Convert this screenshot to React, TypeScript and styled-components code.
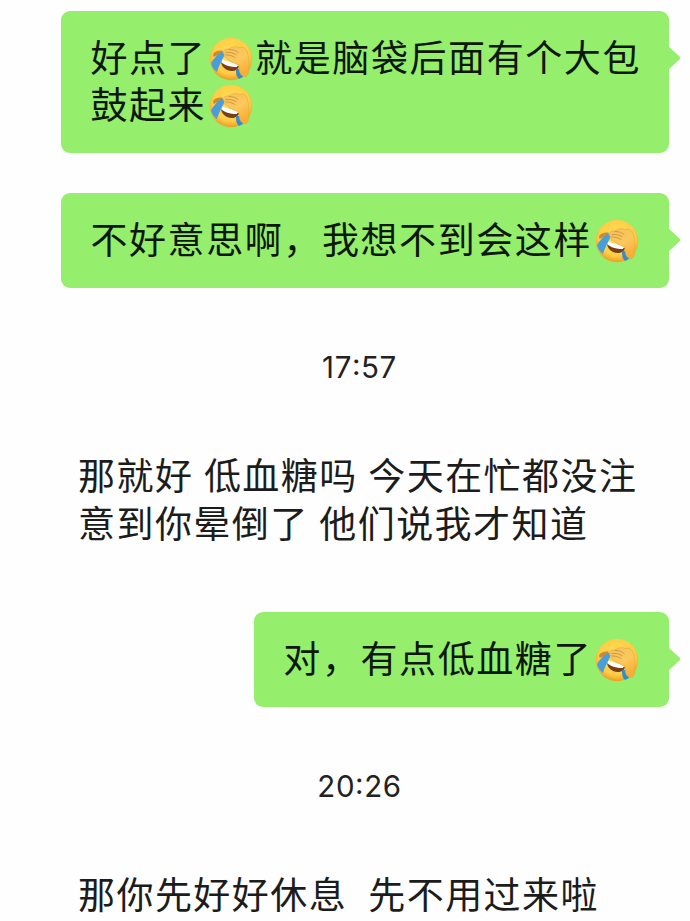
import React, {FC, Fragment, useId} from "react";
import styled, { createGlobalStyle, css } from "styled-components";

const GlobalStyle = createGlobalStyle`
    body {
        margin: 0;
        background: #fefefe;
        overflow: hidden;
    }
`;

type TMessage = {
    readonly type: "sent" | "received" | "time";
    readonly lines: string[];
};

const messages: TMessage[] = [
    {type: "sent", lines: ["好点了🤦就是脑袋后面有个大包", "鼓起来🤦"]},
    {type: "sent", lines: ["不好意思啊，我想不到会这样🤦"]},
    {type: "time", lines: ["17:57"]},
    {type: "received", lines: ["那就好 低血糖吗 今天在忙都没注", "意到你晕倒了 他们说我才知道"]},
    {type: "sent", lines: ["对，有点低血糖了🤦"]},
    {type: "time", lines: ["20:26"]},
    {type: "received", lines: ["那你先好好休息  先不用过来啦"]},
];

const Chat = styled.main`
    width: 690px;
    height: 921px;
    box-sizing: border-box;
    padding: 11px 21px 0 61px;
    display: flex;
    flex-direction: column;
    overflow: hidden;
    background: #fefefe;
    font-family: "Noto Sans CJK SC", sans-serif;
    color: #1c1c1c;
`;

const Bubble = styled.div<{ $sent: boolean }>`
    position: relative;
    box-sizing: border-box;
    flex-shrink: 0;
    letter-spacing: 1.45px;
    ${props => props.$sent && css`
        align-self: flex-end;
        margin-bottom: 40px;
        padding: 24px 28px 24px 29px;
        border-radius: 9px;
        background: #95ee6c;
        color: #0d180a;
        letter-spacing: 1.58px;
    `}
    ${props => !props.$sent && css`
        align-self: flex-start;
        padding: 0 0 65px 17px;
    `}
`;

const Tail = styled.svg`
    position: absolute;
    left: calc(100% - 1px);
    top: 34px;
    width: 13px;
    height: 26px;
`;

const Line = styled.div<{ $sent: boolean }>`
    display: flex;
    align-items: center;
    height: ${props => props.$sent ? "47px" : "47.5px"};
    font-size: 37px;
    line-height: 43px;
    word-spacing: 0.8px;
    white-space: pre;
`;

const Words = styled.span<{ $sent: boolean }>`
    margin-bottom: ${props => props.$sent ? "4px" : "2px"};
`;

const Time = styled.time`
    align-self: center;
    flex-shrink: 0;
    height: 40px;
    margin: 20px 0 64px -11px;
    font-family: Inter, sans-serif;
    font-size: 29.5px;
    font-kerning: none;
    font-feature-settings: "case";
    line-height: 39px;
    letter-spacing: 0.6px;
    color: #222;
`;

const EmojiIcon = styled.svg`
    width: 44px;
    height: 44px;
    margin: 0 2px 0 3px;
    flex-shrink: 0;
`;

const Facepalm: FC = () => {
    const id = useId();

    return (
        <EmojiIcon viewBox="0 0 44 44" role="img" aria-label="捂脸">
            <defs>
                <radialGradient id={`${id}face`} cx="0.5" cy="0.42" r="0.6">
                    <stop offset="0" stopColor="#ffe15c" />
                    <stop offset="0.72" stopColor="#ffcd45" />
                    <stop offset="1" stopColor="#ec9420" />
                </radialGradient>
                <linearGradient id={`${id}hand`} x1="0" y1="0" x2="0.5" y2="1">
                    <stop offset="0" stopColor="#f0c160" />
                    <stop offset="0.6" stopColor="#fbc85a" />
                    <stop offset="1" stopColor="#f9af35" />
                </linearGradient>
            </defs>
            <circle cx="22" cy="22" r="21.2" fill={`url(#${id}face)`} />
            <path d="M12 24C17 27 24 29 30 29C29 34 23 35 18 33C14 31 12 28 12 24Z" fill="#7c3e16" />
            <path d="M13 22.5C18 24 23 26 29 27L28 30C21 30 15 28 12 25Z" fill="#fff" />
            <path d="M4 17C7 13.5 11 13 14 14L12 17C9 18 7 19 4.5 20Z" fill="#c98c35" />
            <path d="M13 15C9 17 4 22 2 26.5C3 30 5 33 8 35C9 31 11 27 14 21C16 18 16 15 13 15Z" fill="#489edb" />
            <path d="M27 32C27 36 27 39 30 42L34 40L31 32Z" fill="#318dcc" />
            <path
                d="M14.5 15.5C14 13 17 11.5 20 12C23 9.5 27 9 30 10.5C35 9 38 12 39 18C40 24 41 32 39 37C37 41 33 40 31 36C30 33 30 30 30 28C26 27 21 24 17 21C15 20 15 18 18 18C15 17.5 14 17 14.5 15.5Z"
                fill={`url(#${id}hand)`}
                stroke="#e5a440"
                strokeWidth="0.6"
            />
            <path
                d="M17 15.5C21 15 24 16 27 17.5M20 12.5C24 12.5 27 13.5 29 15.5M18 18C22 18 24 19.5 26 20.5"
                fill="none"
                stroke="#c98c39"
                strokeWidth="0.8"
                strokeLinecap="round"
            />
        </EmojiIcon>
    );
};

type TMessageLine = {
    readonly text: string;
    readonly sent: boolean;
};

const MessageLine: FC<TMessageLine> = ({text, sent}) => (
    <Line $sent={sent}>
        {text.split("🤦").map((part, index) => (
            <Fragment key={index}>
                {index > 0 && <Facepalm />}
                {part && <Words $sent={sent}>{part}</Words>}
            </Fragment>
        ))}
    </Line>
);

const Message: FC<TMessage> = ({type, lines}) => {
    if (type === "time") {
        return <Time>{lines[0]}</Time>;
    }

    const sent = type === "sent";

    return (
        <Bubble $sent={sent}>
            {lines.map(line => <MessageLine key={line} text={line} sent={sent} />)}
            {sent && (
                <Tail viewBox="0 0 13 26">
                    <path d="M0 1L11.5 11.5Q13 13 11.5 14.5L0 25Z" fill="#95ee6c" />
                </Tail>
            )}
        </Bubble>
    );
};

const App: FC = () => (
    <>
        <GlobalStyle />
        <Chat lang="zh-CN">
            {messages.map((message, index) => <Message key={index} {...message} />)}
        </Chat>
    </>
);

export default App;
